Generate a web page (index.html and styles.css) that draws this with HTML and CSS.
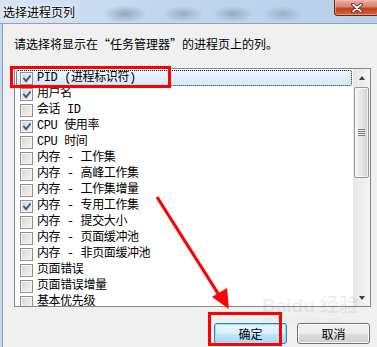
FILE: index.html
```html
<!DOCTYPE html>
<html lang="zh-CN">
  <head>
    <title>选择进程页列</title>
    <meta charset="UTF-8">
    <link rel="stylesheet" href="styles.css">
  </head>
  <body>
    <div class="window">
      <div class="titlebar">
        <span class="title">选择进程页列</span>
        <div class="close">
          <svg width="14" height="10" viewBox="0 0 14 10">
            <path d="M3 1.5 L11 8.5 M11 1.5 L3 8.5" stroke="#4a1a12" stroke-width="3.6" stroke-linecap="round"/>
            <path d="M3 1.5 L11 8.5 M11 1.5 L3 8.5" stroke="#ffffff" stroke-width="1.8" stroke-linecap="round"/>
          </svg>
        </div>
      </div>

      <div class="frame">
        <div class="frame-edge"></div>
        <div class="client">
          <p class="intro">请选择将显示在“任务管理器”的进程页上的列。</p>

          <div class="listbox">
            <div class="items" id="items">
              <!-- rows are filled in by the script below -->
            </div>
            <div class="scrollbar">
              <div class="sb-btn"><span class="arrow up"></span></div>
              <div class="sb-track">
                <div class="thumb"><span class="grip"></span></div>
              </div>
              <div class="sb-btn"><span class="arrow down"></span></div>
            </div>
          </div>

          <div class="actions">
            <button class="btn default">确定</button>
            <button class="btn">取消</button>
          </div>
        </div>
      </div>

      <div class="watermark">
        <span class="wm-logo">Bai<b>du</b> 经验</span>
        <span class="wm-url">jingyan.baidu.com</span>
      </div>

      <!-- red annotations drawn over the dialog -->
      <div class="mark mark-pid"></div>
      <div class="mark mark-ok"></div>
      <svg class="arrow-note" width="377" height="347" viewBox="0 0 377 347">
        <line x1="157" y1="197" x2="219" y2="295" stroke="#ff0000" stroke-width="3.2"/>
        <polygon points="212,297 227,288 229,309" fill="#ff0000"/>
      </svg>
    </div>

    <script>
      const columns = [
        ['PID (进程标识符)', true],
        ['用户名', true],
        ['会话 ID', false],
        ['CPU 使用率', true],
        ['CPU 时间', false],
        ['内存 - 工作集', false],
        ['内存 - 高峰工作集', false],
        ['内存 - 工作集增量', false],
        ['内存 - 专用工作集', true],
        ['内存 - 提交大小', false],
        ['内存 - 页面缓冲池', false],
        ['内存 - 非页面缓冲池', false],
        ['页面错误', false],
        ['页面错误增量', false],
        ['基本优先级', false]
      ];

      const list = document.getElementById('items');
      columns.forEach(([label, checked], i) => {
        const row = document.createElement('div');
        row.className = i === 0 ? 'row selected' : 'row';

        const box = document.createElement('span');
        box.className = checked ? 'cb on' : 'cb';

        const text = document.createElement('span');
        text.className = 'label';
        text.textContent = label;

        row.appendChild(box);
        row.appendChild(text);
        list.appendChild(row);
      });
    </script>
  </body>
</html>
```

FILE: styles.css
```css
body {
  margin: 0;
  padding: 0;
  background-color: #f0f0f0;
  font-family: "Noto Sans CJK SC", "Liberation Sans", sans-serif;
  font-size: 12px;
  color: #000;
}

.window {
  position: relative;
  width: 377px;
  height: 347px;
  overflow: hidden;
  background-color: #f0f0f0;
}

.titlebar {
  height: 23px;
  display: flex;
  align-items: center;
  padding-left: 3px;
  border-bottom: 1px solid #8fa3bb;
  background:
    radial-gradient(ellipse 22px 9px at 125px 14px, rgba(60, 70, 90, 0.35), transparent),
    radial-gradient(ellipse 20px 8px at 183px 14px, rgba(60, 70, 90, 0.3), transparent),
    radial-gradient(ellipse 20px 8px at 233px 14px, rgba(60, 70, 90, 0.3), transparent),
    radial-gradient(ellipse 20px 8px at 283px 14px, rgba(60, 70, 90, 0.25), transparent),
    linear-gradient(to right, #d6e5f4, #c2d7ee 40%, #b8cfe9);
}

.title {
  font-size: 12px;
  line-height: 14px;
  margin-top: 1px;
  color: #000;
  text-shadow: 0 0 6px #fff, 0 0 3px #fff;
}

.close {
  position: absolute;
  top: 0;
  right: -2px;
  width: 43px;
  height: 15px;
  display: flex;
  align-items: center;
  justify-content: center;
  border: 1px solid #6a2517;
  border-top: none;
  border-radius: 0 0 4px 4px;
  background: linear-gradient(#eab1a3, #d98570 45%, #c5401f 55%, #d8613f);
  box-shadow: inset 0 0 0 1px rgba(255, 200, 180, 0.5);
}

.frame {
  display: flex;
  height: 323px;
}

.frame-edge {
  width: 2px;
  background-color: #c6d8ec;
  border-right: 1px solid #8b9cb1;
}

.client {
  flex: 1;
  padding: 12px 6px 0 11px;
}

.intro {
  margin: 0 0 16px;
  height: 16px;
  line-height: 16px;
  font-size: 12px;
}

.listbox {
  display: flex;
  height: 237px;
  border: 1px solid #828790;
  background-color: #fff;
}

.items {
  flex: 1;
  padding: 1px;
  overflow: hidden;
}

.row {
  display: flex;
  align-items: center;
  height: 14px;
  padding-left: 3px;
  border: 1px solid transparent;
  border-radius: 2px;
  font-family: "Liberation Mono", "Noto Sans CJK SC", monospace;
  font-size: 12px;
  line-height: 14px;
  white-space: nowrap;
}

.row.selected {
  border: 1px dotted #1a1a1a;
  background: linear-gradient(#eef5fe, #d6e7fb);
}

.cb {
  position: relative;
  width: 11px;
  height: 11px;
  margin-right: 4px;
  border: 1px solid #8e8f8f;
  box-shadow: inset 0 0 0 1px #f6f6f6;
  background: linear-gradient(135deg, #d4d4d4, #f4f4f4);
  flex: 0 0 auto;
}

.cb.on::after {
  content: "";
  position: absolute;
  left: 2px;
  top: 1px;
  width: 6px;
  height: 3px;
  border-left: 2px solid #3d5a9c;
  border-bottom: 2px solid #3d5a9c;
  transform: rotate(-50deg) skewX(-8deg);
  transform-origin: 50% 50%;
  top: 2px;
}

.label {
  letter-spacing: -0.4px;
}

.scrollbar {
  width: 17px;
  display: flex;
  flex-direction: column;
  background: linear-gradient(to right, #e6e6e6, #f4f4f4);
}

.sb-btn {
  height: 17px;
  display: flex;
  align-items: center;
  justify-content: center;
}

.arrow {
  width: 0;
  height: 0;
  border-left: 3px solid transparent;
  border-right: 3px solid transparent;
}

.arrow.up {
  border-bottom: 4px solid #3c3c3c;
}

.arrow.down {
  border-top: 4px solid #3c3c3c;
}

.sb-track {
  flex: 1;
  padding: 1px 1px 0;
}

.thumb {
  height: 89px;
  display: flex;
  align-items: center;
  justify-content: center;
  border: 1px solid #979797;
  border-radius: 2px;
  background: linear-gradient(to right, #f4f4f4, #e6e6e6 50%, #cfcfcf);
  box-shadow: inset 0 0 0 1px rgba(255, 255, 255, 0.7);
}

.grip {
  width: 7px;
  height: 7px;
  background: repeating-linear-gradient(#555 0 1px, transparent 1px 2px);
  opacity: 0.7;
}

.actions {
  display: flex;
  justify-content: flex-end;
  gap: 10px;
  margin-top: 16px;
  padding-right: 1px;
}

.btn {
  width: 73px;
  height: 21px;
  padding: 0;
  font-family: "Noto Sans CJK SC", sans-serif;
  font-size: 12px;
  color: #000;
  border: 1px solid #707070;
  border-radius: 3px;
  background: linear-gradient(#f2f2f2, #ebebeb 50%, #dddddd 51%, #cfcfcf);
  box-shadow: inset 0 0 0 1px rgba(255, 255, 255, 0.8);
}

.btn.default {
  border-color: #3c7fb1;
  box-shadow: inset 0 0 0 1px #8ee4fb;
  background: linear-gradient(#eaf6fd, #d9f0fc 50%, #bee6fd 51%, #a7d9f5);
}

.watermark {
  position: absolute;
  left: 262px;
  top: 296px;
  display: flex;
  flex-direction: column;
  color: rgba(0, 0, 0, 0.07);
  pointer-events: none;
}

.wm-logo {
  font-family: "Liberation Sans", "Noto Sans CJK SC", sans-serif;
  font-size: 19px;
  font-weight: bold;
  line-height: 20px;
}

.wm-url {
  font-family: "Liberation Sans", sans-serif;
  font-size: 10px;
  line-height: 10px;
}

.mark {
  position: absolute;
  border: 3px solid #ff0000;
}

.mark-pid {
  left: 10px;
  top: 66px;
  width: 155px;
  height: 16px;
}

.mark-ok {
  left: 208px;
  top: 312px;
  width: 68px;
  height: 28px;
}

.arrow-note {
  position: absolute;
  left: 0;
  top: 0;
}
```
